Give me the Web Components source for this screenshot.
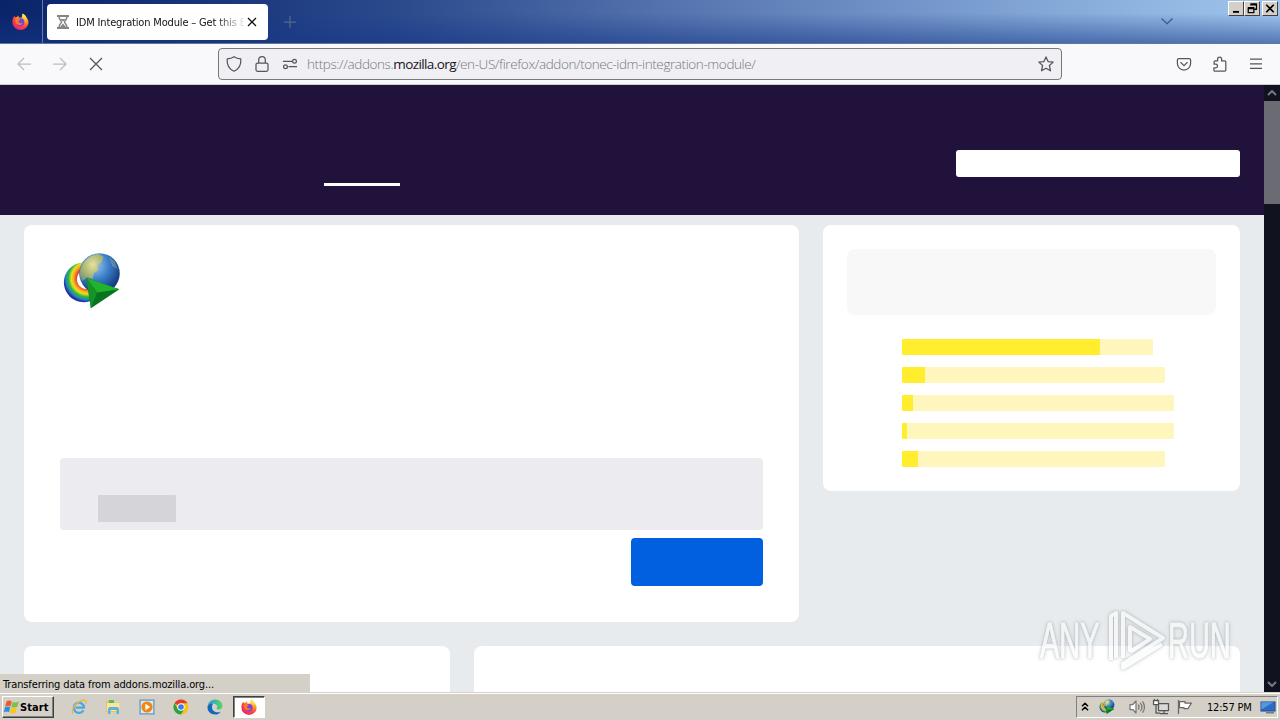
<!DOCTYPE html>
<html lang="en">
<head>
<meta charset="utf-8">
<title>IDM Integration Module</title>
<style>
  html, body {
    height: 100%;
    margin: 0;
    overflow: hidden;
  }
  body {
    color: black;
    font-family: "DejaVu Sans Condensed", "DejaVu Sans", sans-serif;
    font-size: 11px;
  }
</style>
</head>
<body>

<x-desktop></x-desktop>

<script>

/*
 *  Icons
 */

const icons = {

  back: '<path d="M15 8H2M8 2 2 8l6 6"/>',
  forward: '<path d="M1 8h13M8 2l6 6-6 6"/>',
  stop: '<path d="m2 2 12 12M14 2 2 14"/>',
  shield: '<path d="M8 .7c2 1.400 4.300 2 6.800 2.200.5 5.500-1.500 10-6.800 12.400C2.700 12.900.7 8.400 1.200 2.900 3.700 2.700 6 2.100 8 .7z"/>',
  lock: '<rect x="2" y="7" width="12" height="8.300" rx="1.500"/><path d="M4.700 7V4a3.300 3.300 0 0 1 6.600 0V7"/>',
  permissions: '<circle cx="12.500" cy="5.300" r="1.900"/><path d="M1 5.300h9M6.500 10.700h8.500"/><circle cx="3.500" cy="10.700" r="1.900"/>',
  star: '<path d="m8 .9 2.100 4.700 5.100.5-3.800 3.400 1.100 5.300L8 12.200l-4.500 2.600 1.100-5.300L.8 6.100l5.100-.5z"/>',
  pocket: '<path d="M2.800 2.500h10.400c.8 0 1.400.6 1.400 1.400v3.600a6.600 6.600 0 0 1-13.200 0V3.900c0-.8.6-1.400 1.400-1.400z"/><path d="m4.500 6.200 3.500 3.400 3.500-3.400"/>',
  puzzle: '<path d="M2.500 15h10.200c.7 0 1.100-.4 1.100-1.100V6c0-.7-.4-1.100-1.100-1.100H9.600V3a2 2 0 0 0-4 0v1.900H3.200c-.7 0-1.100.4-1.100 1.100v2.200h1.600a1.800 1.800 0 0 1 0 3.600H1.900v2.500c0 .4.200.7.600.7z"/>',
  menu: '<path d="M2 3.200h12M2 7.800h12M2 12.400h12"/>',
  chevron: '<path d="m2.500 5.500 5.500 5.300 5.500-5.300"/>',
  up: '<path d="m4 10 4-4 4 4" stroke-width="2"/>',
  down: '<path d="m4 6 4 4 4-4" stroke-width="2"/>',
  plus: '<path d="M8 2v12M2 8h12"/>',
  close: '<path d="m4 4 8 8M12 4l-8 8"/>',

  hourglass: `
    <path d="M2 2h12M2 14h12" stroke-width="2"/>
    <path d="M4 2.500C4 6 6.500 6.500 6.500 8S4 10 4 13.500M12 2.500C12 6 9.500 6.500 9.500 8s2.500 2 2.500 5.500" stroke-width="1.500"/>
    <path d="M5.500 5h5L8 7.500zM5 13l3-3.500 3 3.500z" fill="currentColor" stroke="none"/>`,

  firefox: `
    <defs>
      <radialGradient id="f" cx=".75" cy=".15" r=".95">
        <stop offset="0" stop-color="#ffe24a"/><stop offset=".4" stop-color="#ff9a1f"/>
        <stop offset=".7" stop-color="#ff4536"/><stop offset="1" stop-color="#e3207a"/>
      </radialGradient>
    </defs>
    <g stroke="none">
      <path d="M10 .5c2.500 1.400 3.300 2.900 3.700 4.100 1.100.9 1.900 2.600 1.900 4.100A7.600 7.200 0 0 1 .4 8.700C.3 6.500 1 4.300 2.200 2.800l.7 1.300L5 3.600 5.600 2l1 2.200L9 4.500z" fill="url(#f)"/>
      <circle cx="8" cy="8.700" r="3.700" fill="#7a3fe0"/>
      <path d="M3.400 5.400c1.400-.4 3.300.1 4.700 1.200-1.200.3-2 .7-2 1.500 0 1.600 2.300 1.900 3.900 1-.5 2.200-3.600 3-5.400 1.300C3.300 9.100 3 7 3.400 5.400z" fill="#ff7a27"/>
      <path d="M10 .5c2.500 1.400 4 3.400 4.200 6-.6-1.100-1.400-1.800-2.600-2C10 4 9.500 2 10 .5z" fill="#ffe04a"/>
    </g>`,

  ie: `
    <g fill="none">
      <path d="M12.400 11.200A5.100 5.100 0 1 1 13 8.700H4.500" stroke="#4aa9e3" stroke-width="2.300"/>
      <path d="M2.200 14.600C-.2 13 2.400 7 7 3.600 10.500 1 14.500.4 15 2.200c.2.700 0 1.500-.5 2.400" stroke="#efb935" stroke-width="1.300"/>
    </g>`,

  folder: `
    <g stroke="none">
      <path d="M1 2h5l1 1.500h7.500V13H1z" fill="#e6c55d"/>
      <path d="M4 1h5v5H4z" fill="#61b85a"/><path d="M2 4h12.500v8H2z" fill="#f8e69c"/>
      <path d="M3 15V9.500L4.500 8h8L14 9.500V15h-2.500v-4h-6v4z" fill="#5eb2d8"/>
    </g>`,

  player: `
    <g stroke="none">
      <path d="M.5.500h15v15H.5z" fill="#5a94c4"/><path d="M1.700 1.700h12.600v12.600H1.700z" fill="#d9e9f6"/>
      <circle cx="8" cy="8" r="5.600" fill="#f5850c"/><path d="M6.300 4.800v6.400L11.300 8z" fill="#fff"/>
    </g>`,

  chrome: `
    <g stroke="none">
      <circle cx="8" cy="8" r="7.500" fill="#fbc116"/>
      <path d="M8 8 1.500 4.250A7.500 7.500 0 0 1 14.500 4.250H8z" fill="#e33b2e"/>
      <path d="M1.500 4.250A7.500 7.500 0 0 0 8 15.500l3.200-5.600L8 8 4.800 9.900z" fill="#28a148"/>
      <circle cx="8" cy="8" r="3.700" fill="#fff"/><circle cx="8" cy="8" r="2.800" fill="#3b7de9"/>
    </g>`,

  edge: `
    <defs>
      <linearGradient id="e" x1="0" x2="1"><stop stop-color="#1d9be0"/><stop offset="1" stop-color="#5fd35c"/></linearGradient>
    </defs>
    <g stroke="none">
      <path d="M.6 7.500C1 3.400 4.200.5 8.200.5c4.300 0 7.300 3 7.300 6.400 0 2.300-1.800 3.600-3.800 3.600-1.400 0-2.300-.5-2.300-1 .6-.5.9-1 .9-1.700C10.300 6 8.500 4.600 6 4.600 3.700 4.600 1.600 5.600.6 7.500z" fill="url(#e)"/>
      <path d="M.5 8C.9 5.800 3.300 4.400 6.200 4.600 5.600 5.300 5 6.700 5 8.300c0 3.100 2.700 5 5.700 5 1.300 0 2.400-.4 3.300-.9-1.200 1.900-3.400 3.100-5.900 3.100C3.500 15.500.2 12 .5 8z" fill="#1767b8"/>
    </g>`,

  windows: `
    <g stroke="none">
      <path d="M2.500 2.500C4.500 1 6.200 1.500 7.800 2.500L6.500 7.500C4.800 6.500 3.200 6.300 1.200 7.500z" fill="#f1592a"/>
      <path d="M8.600 2.800c1.700 1 3.700 1.200 6.400-.6l-1.700 5.500c-2 1.100-4.200 1-5.900.2z" fill="#7cc142"/>
      <path d="M1 8.300c1.900-1.200 3.500-1 5.200-.1L5 13.200C3.300 12.200 1.700 12.300-.2 13.300z" fill="#2a8fdf"/>
      <path d="M7.100 8.700c1.700.9 3.700.9 5.900-.1l-1.500 5.100c-2 1-4 .9-5.700-.1z" fill="#fcc419"/>
    </g>`,

  idm: `
    <defs>
      <radialGradient id="g" cx=".38" cy=".3" r=".75">
        <stop offset="0" stop-color="#a9cbe6"/><stop offset=".45" stop-color="#3d82cd"/><stop offset="1" stop-color="#0d2d72"/>
      </radialGradient>
      <radialGradient id="l" cx=".55" cy=".4" r=".7">
        <stop offset="0" stop-color="#e6e29a"/><stop offset=".7" stop-color="#9dae70"/><stop offset="1" stop-color="#6f8f8a"/>
      </radialGradient>
      <radialGradient id="r" gradientUnits="userSpaceOnUse" cx="6.700" cy="7" r="6.700">
        <stop offset=".3" stop-color="#f0a090"/><stop offset=".42" stop-color="#e8452a"/>
        <stop offset=".55" stop-color="#f7b41e"/><stop offset=".63" stop-color="#e4e020"/>
        <stop offset=".74" stop-color="#35b53c"/><stop offset=".84" stop-color="#1f8fb0"/>
        <stop offset=".93" stop-color="#2038b8"/><stop offset="1" stop-color="#3a1c8c"/>
      </radialGradient>
    </defs>
    <g stroke="none">
      <path d="M5.800 2.800a5.300 5.300 0 1 0 .01 0zM6.500 4.700a2.500 2.600 0 1 1-.01 0z" fill="url(#r)" fill-rule="evenodd"/>
      <circle cx="10" cy="5.700" r="5.400" fill="url(#g)"/>
      <path d="M4.800 4.900C5.400 2.400 7.600.7 9.800.5l1.300.8-.5 1.300-1.200 1 .3 1.200-1.200.8-.3 1.600-1.500-.5-1.200 1C4.700 7 4.500 6 4.800 4.900z" fill="url(#l)"/>
      <path d="m12.600 1.300 1.400 1.200.8 2-1.400-.7z" fill="#9fb891" opacity=".4"/>
      <path d="M6.500 6.900 15.300 9.900 7.700 15z" fill="#087320"/>
      <path d="m6.500 6.900 8.800 3-5.900.9z" fill="#22b32c"/><path d="m6.500 6.900 2.900 3.900L7.700 15z" fill="#149428"/>
    </g>`,

  tray: '<path d="m5 7.300 3-3 3 3M5 11.300l3-3 3 3" stroke-width="1.500"/>',
  volume: `
    <path d="M1 5.500h2.800L7 2v12l-3.200-3.500H1z" fill="#fff" stroke="#777"/>
    <path d="M9.200 5.500c1 1.500 1 3.500 0 5M11.300 3.800c2 2.500 2 5.900 0 8.400M13.500 2.300c2.400 3.400 2.400 8 0 11.400" stroke="#777"/>`,
  network: `
    <path d="M5.500 4.500h10v7h-10zM7 14.500h8M11 12v2.500" fill="#d9d9d9" stroke="#555"/>
    <path d="M.5 1.500h5v4h-5z" fill="#fff" stroke="#555"/><path d="M1.500 0v1.500M4.500 0v1.500M3 5.500v8.500h4" stroke="#555"/>`,
  flag: '<path d="M1.500 1v14" stroke="#666"/><path d="M2.500 2.500h5.500V4h6.500l-2 3-1.500 2.500H7V8.500H2.500z" fill="#fff" stroke="#666"/>',
  screen: `
    <g stroke="none">
      <path d="M.5 2.500h15v10H.5z" fill="#183f83"/><path d="M1.300 3.200h13.400v8.500H1.300z" fill="#2c6cc4"/>
      <path d="M1.300 3.200h12L3 9.500l-1.700.7z" fill="#5698e0"/><path d="M6 13h8v1.500H6z" fill="#7a7a7a"/>
    </g>`,

  minimize: '<path d="M4 12.500h8" stroke-width="2.500"/>',
  restore: '<path d="M6.500 4V2H14v7h-3M6.500 3H14" stroke-width="1.700"/><path d="M3 7h7.500v6.500H3zM3 8h7.500" stroke-width="1.700"/>',
  quit: '<path d="m3 3 10 10M13 3 3 13" stroke-width="2.300"/>'

}

customElements.define(

  'x-icon',

  class Icon extends HTMLElement {

    constructor() {

      super()
      this.attachShadow({ mode: 'open' })

    }

    connectedCallback() {

      this.shadowRoot.innerHTML = `
        <style>
          :host { display: block; flex: none; height: 16px; width: 16px; }
          svg { display: block; height: 100%; overflow: visible; width: 100%; }
        </style>
        <svg viewBox="0 0 16 16" fill="none" stroke="currentColor" stroke-width="1.250" stroke-linejoin="round">
          ${icons[this.getAttribute('name')]}
        </svg>
      `

    }

  }

)

// Registers an element whose shadow root is a clone of one fixed template

function component(name, html) {

  const template = document.createElement('template')
  template.innerHTML = html

  customElements.define(name, class extends HTMLElement {

    constructor() {

      super()
      this.attachShadow({ mode: 'open' }).appendChild(
        template.content.cloneNode(true)
      )

    }

  })

}

/*
 *  Title bar
 */

component('x-tab', `
  <style>
    :host {
      align-items: center;
      background: white;
      border-radius: 4px;
      box-sizing: border-box;
      color: #111;
      display: flex;
      height: 36px;
      margin: 4px 0 0 4px;
      padding: 0 8px;
      width: 221px;
    }
    .title {
      flex: 1;
      letter-spacing: -.16px;
      line-height: 14px;
      margin: 2px 0 0 5px;
      -webkit-mask-image: linear-gradient(90deg, black 140px, transparent 170px);
      mask-image: linear-gradient(90deg, black 140px, transparent 170px);
      overflow: hidden;
      white-space: nowrap;
    }
    .load { color: #858585; }
  </style>
  <x-icon class="load" name="hourglass"></x-icon>
  <span class="title"><slot></slot></span>
  <x-icon name="close"></x-icon>
`)

component('x-titlebar', `
  <style>
    :host {
      background:
        linear-gradient(180deg, transparent 30%, rgba(20, 55, 135, .55)),
        linear-gradient(97deg, #0a246a 0%, #19357c 17%, #2c4c8e 32%, #5573ae 52%, #7193c8 70%, #94bae4 92%, #a0c6ee 100%);
      border-bottom: 1px solid #667796;
      box-sizing: border-box;
      display: flex;
      height: 44px;
    }
    .app {
      border-right: 1px solid #687ba8;
      padding: 13px 22px 0 12px;
      width: 8px;
    }
    .app x-icon { height: 17px; width: 17px; }
    .plus { color: #53678a; margin: 14px 0 0 14px; }
    .all { color: #3c5d91; margin: 13px 53px 0 auto; }
    .buttons { display: flex; padding: 1px 2px 0 0; }
    .buttons x-icon {
      background: #d4d0c8;
      border: 1px solid;
      border-color: white #404040 #404040 white;
      box-sizing: border-box;
      height: 15px;
      padding: 0 1px;
      width: 16px;
    }
    .buttons x-icon:last-child { margin-left: 2px; }
  </style>
  <div class="app"><x-icon name="firefox"></x-icon></div>
  <x-tab>IDM Integration Module – Get this Extension</x-tab>
  <x-icon class="plus" name="plus"></x-icon>
  <x-icon class="all" name="chevron"></x-icon>
  <div class="buttons">
    <x-icon name="minimize"></x-icon>
    <x-icon name="restore"></x-icon>
    <x-icon name="quit"></x-icon>
  </div>
`)

/*
 *  Toolbar
 */

component('x-urlbar', `
  <style>
    :host {
      align-items: center;
      background: #f0f0f4;
      border: 1px solid #77777d;
      border-radius: 4px;
      box-sizing: border-box;
      display: flex;
      gap: 12px;
      height: 32px;
      padding: 0 7px;
      width: 844px;
    }
    .url {
      color: #77777d;
      flex: 1;
      font: 300 13.5px "Open Sans", "Noto Sans", sans-serif;
      letter-spacing: -.405px;
      margin-left: -3px;
      white-space: nowrap;
    }
    ::slotted(b) { color: #15141a; font-weight: 400; letter-spacing: -.6px; }
  </style>
  <x-icon name="shield"></x-icon>
  <x-icon name="lock"></x-icon>
  <x-icon name="permissions"></x-icon>
  <span class="url"><slot></slot></span>
  <x-icon name="star"></x-icon>
`)

component('x-toolbar', `
  <style>
    :host {
      align-items: center;
      background: #f9f9fb;
      border-bottom: 1px solid #ccccd2;
      box-sizing: border-box;
      color: #55555d;
      display: flex;
      gap: 20px;
      height: 41px;
      padding: 0 16px;
    }
    .off { color: #bdbdc2; }
    x-urlbar { margin-left: 94px; }
    .pocket { margin-left: auto; }
  </style>
  <x-icon class="off" name="back"></x-icon>
  <x-icon class="off" name="forward"></x-icon>
  <x-icon name="stop"></x-icon>
  <x-urlbar>https://addons.<b>mozilla.org</b>/en-US/firefox/addon/tonec-idm-integration-module/</x-urlbar>
  <x-icon class="pocket" name="pocket"></x-icon>
  <x-icon name="puzzle"></x-icon>
  <x-icon name="menu"></x-icon>
`)

/*
 *  Add-on page
 */

component('x-header', `
  <style>
    :host {
      background: #20123a;
      box-sizing: border-box;
      display: flex;
      height: 130px;
      justify-content: space-between;
      padding: 65px 24px 0 324px;
    }
    .current { background: white; height: 3px; margin-top: 33px; width: 76px; }
    .search { background: white; border-radius: 3px; height: 27px; width: 284px; }
  </style>
  <div class="current"></div>
  <div class="search"></div>
`)

component('x-card', `
  <style>
    :host {
      background: white;
      border-radius: 8px;
      box-sizing: border-box;
      display: block;
    }
  </style>
  <slot></slot>
`)

component('x-summary', `
  <style>
    :host { display: flex; flex-direction: column; padding: 27px 36px 36px; }
    .logo { height: 60px; margin-left: 2px; width: 60px; }
    .warning {
      background: #ececf0;
      border-radius: 4px;
      box-sizing: border-box;
      height: 72px;
      margin-top: 146px;
      padding: 37px 38px 0;
    }
    .learn { background: #d5d4d9; border-radius: 1px; height: 27px; width: 78px; }
    .install {
      align-self: flex-end;
      background: #0060df;
      border-radius: 4px;
      height: 48px;
      margin-top: 8px;
      width: 132px;
    }
  </style>
  <x-icon class="logo" name="idm"></x-icon>
  <div class="warning"><div class="learn"></div></div>
  <div class="install"></div>
`)

customElements.define(

  'x-rating',

  class Rating extends HTMLElement {

    constructor() {

      super()
      this.attachShadow({ mode: 'open' })

    }

    connectedCallback() {

      this.shadowRoot.innerHTML = `
        <style>
          :host {
            background: #fff6bd;
            border-radius: 1px;
            display: block;
            height: 16px;
            overflow: hidden;
            width: ${this.getAttribute('width')}px;
          }
          div { background: #ffed2e; height: 100%; width: ${this.getAttribute('value')}px; }
        </style>
        <div></div>
      `

    }

  }

)

component('x-ratings', `
  <style>
    :host { display: block; padding: 24px; }
    .meta { background: #f8f8f8; border-radius: 8px; height: 66px; }
    .bars { display: flex; flex-direction: column; gap: 12px; padding: 24px 0 0 55px; }
  </style>
  <div class="meta"></div>
  <div class="bars">
    <x-rating width="251" value="198"></x-rating>
    <x-rating width="263" value="23"></x-rating>
    <x-rating width="272" value="11"></x-rating>
    <x-rating width="272" value="5"></x-rating>
    <x-rating width="263" value="16"></x-rating>
  </div>
`)

component('x-scrollbar', `
  <style>
    :host {
      background: #10121f;
      color: #777983;
      display: flex;
      flex-direction: column;
      justify-content: space-between;
      width: 16px;
    }
    .thumb { background: #6b6c73; height: 103px; margin-bottom: auto; }
  </style>
  <x-icon name="up"></x-icon>
  <div class="thumb"></div>
  <x-icon name="down"></x-icon>
`)

component('x-page', `
  <style>
    :host { background: #e7ebee; display: flex; overflow: hidden; position: relative; }
    main { flex: 1; }
    .row { align-items: flex-start; display: flex; gap: 24px; padding: 10px 24px 14px; }
    .summary { height: 397px; width: 775px; }
    .ratings { flex: 1; height: 266px; }
    .screens { height: 80px; width: 426px; }
    .about { flex: 1; height: 80px; }
    .status {
      background: #d4d0c8;
      bottom: 0;
      box-sizing: border-box;
      height: 18px;
      left: 0;
      letter-spacing: -.13px;
      line-height: 21px;
      padding-left: 3px;
      position: absolute;
      white-space: nowrap;
      width: 310px;
    }
    x-watermark { bottom: 18px; position: absolute; right: 44px; }
  </style>
  <main>
    <x-header></x-header>
    <div class="row">
      <x-card class="summary"><x-summary></x-summary></x-card>
      <x-card class="ratings"><x-ratings></x-ratings></x-card>
    </div>
    <div class="row">
      <x-card class="screens"></x-card>
      <x-card class="about"></x-card>
    </div>
  </main>
  <x-scrollbar></x-scrollbar>
  <div class="status">Transferring data from addons.mozilla.org...</div>
  <x-watermark></x-watermark>
`)

component('x-watermark', `
  <style>
    :host { display: block; height: 66px; width: 200px; }
    svg {
      display: block;
      filter: drop-shadow(0 0 1px rgba(90, 95, 100, .5)) drop-shadow(0 0 2px rgba(90, 95, 100, .3));
      opacity: .65;
      overflow: visible;
    }
    text { font: 29px "Liberation Sans", sans-serif; }
  </style>
  <svg width="200" height="66" viewBox="0 0 200 66">
    <g fill="#fafbfb" stroke="#fafbfb" stroke-width=".7" transform="scale(1 1.700)">
      <text x="4" y="29.500">ANY</text>
      <text x="132" y="29.500">RUN</text>
    </g>
    <g fill="none" stroke="#fafbfb" stroke-width="4" stroke-linejoin="round">
      <path d="M75 52V8l5-3v45M87 50V5l40 25-40 26v4l39-24"/>
      <path d="M94 44V19l20 12-20 13"/>
    </g>
  </svg>
`)

/*
 *  Taskbar
 */

component('x-start', `
  <style>
    :host {
      align-items: center;
      border: 1px solid;
      border-color: white #404040 #404040 white;
      box-shadow: inset -1px -1px #808080;
      box-sizing: border-box;
      display: flex;
      font-weight: bold;
      height: 22px;
      letter-spacing: .1px;
      padding-left: 1px;
      width: 52px;
    }
  </style>
  <x-icon name="windows"></x-icon>
  <slot></slot>
`)

component('x-taskbar', `
  <style>
    :host {
      background: #d4d0c8;
      box-shadow: inset 0 1px #d4d0c8, inset 0 2px white;
      box-sizing: border-box;
      display: flex;
      height: 28px;
      padding: 4px 2px 2px;
    }
    .apps { display: flex; margin-left: 8px; }
    .apps div {
      align-items: center;
      border: 1px solid transparent;
      box-sizing: border-box;
      display: flex;
      height: 22px;
      justify-content: center;
      margin: 0 1px;
      width: 32px;
    }
    .apps .active {
      background: white;
      border-color: #404040 white white #404040;
      box-shadow: inset 1px 1px #808080;
    }
    .tray {
      align-items: center;
      border: 1px solid;
      border-color: #808080 white white #808080;
      box-sizing: border-box;
      display: flex;
      height: 22px;
      margin-left: auto;
      width: 202px;
    }
    .idm { margin: 0 14px 0 6px; }
    .network { margin: 0 8px; }
    .clock { letter-spacing: -.2px; margin: 0 auto 0 14px; white-space: nowrap; }
    .screen { margin-right: 1px; }
  </style>
  <x-start>Start</x-start>
  <div class="apps">
    <div><x-icon name="ie"></x-icon></div>
    <div><x-icon name="folder"></x-icon></div>
    <div><x-icon name="player"></x-icon></div>
    <div><x-icon name="chrome"></x-icon></div>
    <div><x-icon name="edge"></x-icon></div>
    <div class="active"><x-icon name="firefox"></x-icon></div>
  </div>
  <div class="tray">
    <x-icon name="tray"></x-icon>
    <x-icon class="idm" name="idm"></x-icon>
    <x-icon name="volume"></x-icon>
    <x-icon class="network" name="network"></x-icon>
    <x-icon name="flag"></x-icon>
    <span class="clock">12:57 PM</span>
    <x-icon class="screen" name="screen"></x-icon>
  </div>
`)

component('x-desktop', `
  <style>
    :host { display: flex; flex-direction: column; height: 720px; width: 1280px; }
    x-page { flex: 1; min-height: 0; }
  </style>
  <x-titlebar></x-titlebar>
  <x-toolbar></x-toolbar>
  <x-page></x-page>
  <x-taskbar></x-taskbar>
`)

</script>
</body>
</html>
